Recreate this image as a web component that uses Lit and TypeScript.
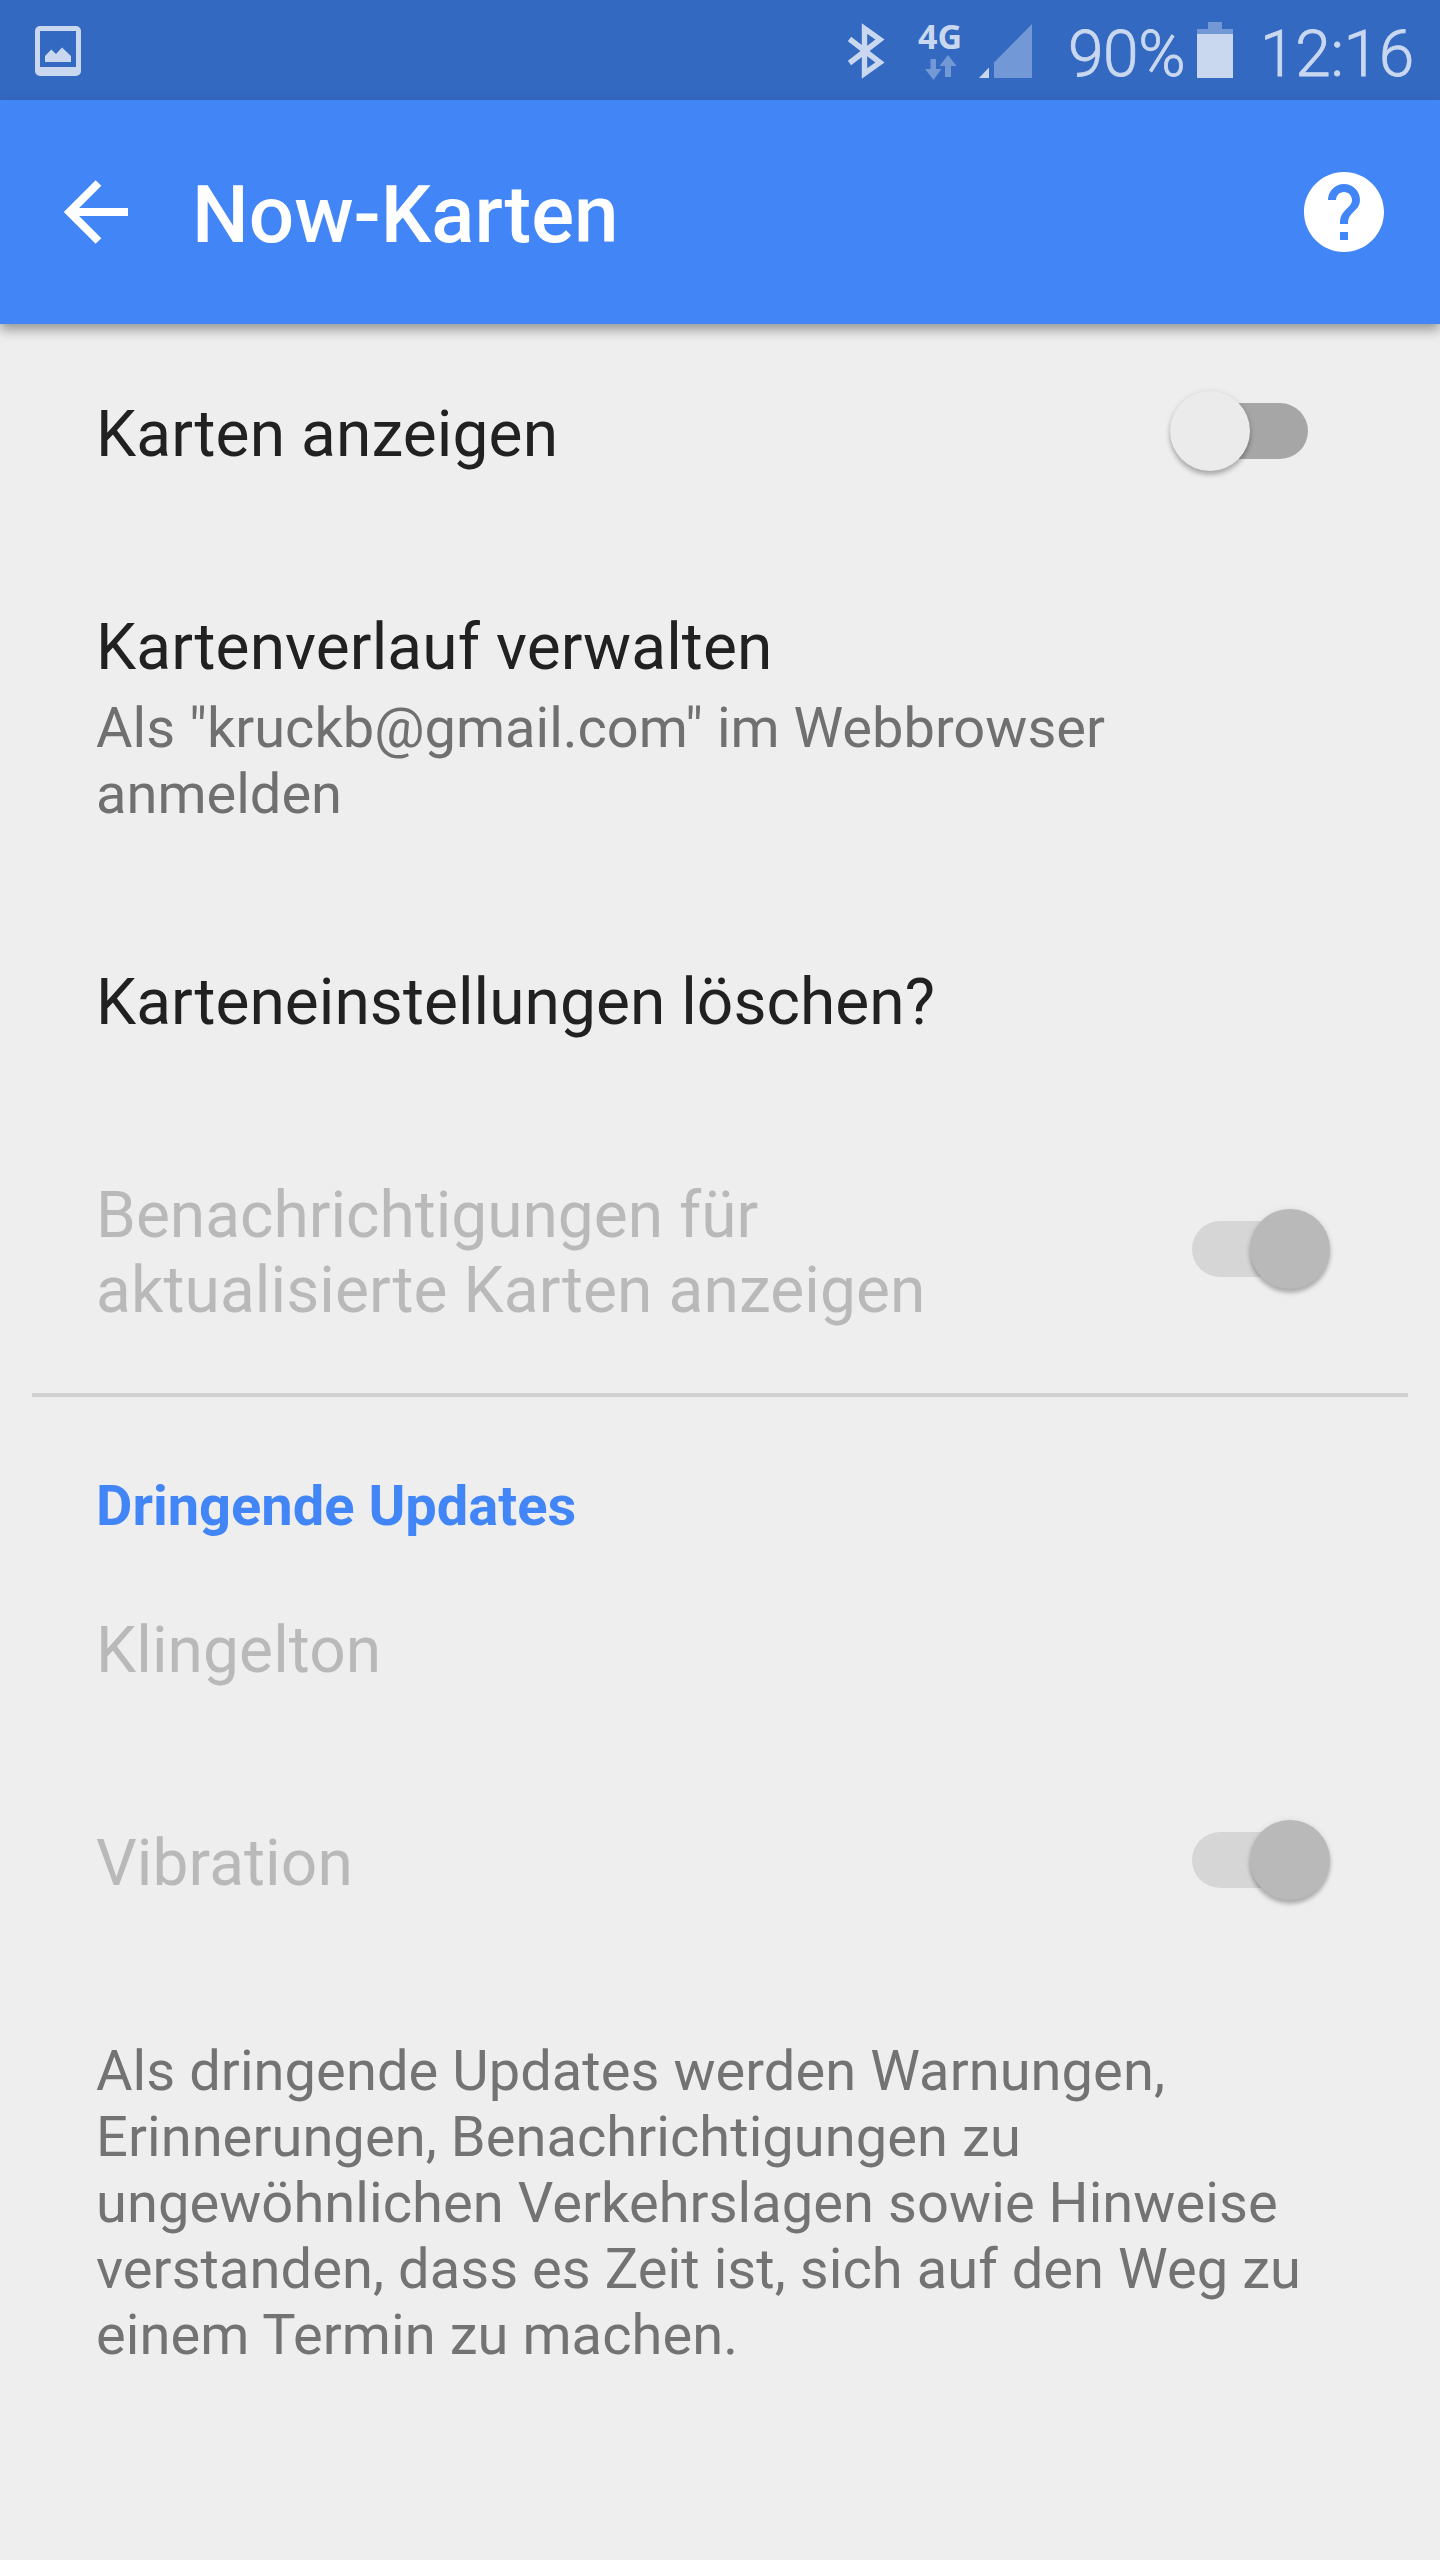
import { LitElement, html, css } from "lit";
import { customElement, property } from "lit/decorators.js";

@customElement("toggle-switch")
class ToggleSwitch extends LitElement {
  @property({ type: Boolean, reflect: true }) on = false;

  static styles = css`
    :host { display: block; flex: none; width: 160px; height: 80px; }
    .box { display: flex; align-items: center; width: 160px; height: 80px; position: relative; }
    .track { width: 116px; height: 56px; margin-left: 22px; border-radius: 28px; background: #a6a6a6; }
    .thumb {
      position: absolute; left: 0; top: 0; width: 80px; height: 80px; border-radius: 50%;
      background: #ebebeb; box-shadow: 0 4px 5px rgba(0, 0, 0, 0.26), 0 0 6px rgba(0, 0, 0, 0.08);
    }
    :host([on]) .track { background: #d6d6d6; }
    :host([on]) .thumb {
      left: 80px; background: #b9b9b9;
      box-shadow: 0 4px 4px rgba(0, 0, 0, 0.25), 0 0 6px rgba(0, 0, 0, 0.08);
    }
  `;

  render() {
    return html`<div class="box"><div class="track"></div><div class="thumb"></div></div>`;
  }
}

@customElement("status-bar")
class StatusBar extends LitElement {
  static styles = css`
    :host { display: block; }
    .bar {
      display: flex; align-items: flex-start; height: 100px; background: #3469c1; color: #cad8ef;
      font: 300 64px/76px Roboto, sans-serif;
    }
    svg { display: block; flex: none; }
    .shot { margin: 26px 0 0 35px; }
    .bt { margin: 23px 0 0 auto; }
    .net { width: 44px; margin: 23px 0 0 33px; }
    .gen { font: 700 34px/26px "Open Sans", "Noto Sans", sans-serif; height: 32px; white-space: nowrap; }
    .sig { margin: 24px 0 0 17px; }
    .pct, .time { white-space: nowrap; -webkit-text-stroke: 0.8px #cad8ef; }
    .pct { width: 115px; margin: 17px 0 0 36px; letter-spacing: -0.4px; }
    .bat { margin: 22px 0 0 14px; }
    .time { width: 180px; margin: 17px 0 0 27px; letter-spacing: -0.3px; }
  `;

  render() {
    return html`<div class="bar">
      <svg class="shot" width="46" height="50" viewBox="0 0 46 50">
        <path fill="#cad8ef" fill-rule="evenodd" d="M5 0H41a5 5 0 0 1 5 5V45a5 5 0 0 1-5 5H5a5 5 0 0 1-5-5V5a5 5 0 0 1 5-5ZM5 5V41H41V5ZM10 36V30L16.3 23.5 21 28 27 21.5 36 30V36Z" />
      </svg>
      <svg class="bt" width="38" height="56" viewBox="0 0 38 56">
        <path fill="none" stroke="#cad8ef" stroke-width="5.4" d="M2.500 16 33 39.500 17.500 50.500V5.500L33 16.500 2.500 40" />
      </svg>
      <div class="net">
        <div class="gen">4G</div>
        <svg width="44" height="26" viewBox="0 0 44 26">
          <path fill="#7298d6" d="M12.500 4H18V14H23.500L15.500 25 7 14H12.500ZM27 22V11H21.500L30 0 38.500 11H33V22Z" />
        </svg>
      </div>
      <svg class="sig" width="53" height="54" viewBox="0 0 53 54">
        <path fill="#cad8ef" d="M0 54 10 43.500V54Z" />
        <path fill="#7298d6" d="M15 54V38.500L53 0V54Z" />
      </svg>
      <div class="pct">90%</div>
      <svg class="bat" width="36" height="56" viewBox="0 0 36 56">
        <path fill="#7298d6" d="M11 0H25V7H36V12H0V7H11Z" />
        <path fill="#cad8ef" d="M0 12H36V56H0Z" />
      </svg>
      <div class="time">12:16</div>
    </div>`;
  }
}

@customElement("app-root")
class AppRoot extends LitElement {
  static styles = css`
    :host {
      display: block; height: 2560px; overflow: hidden; background: #eeeeee;
      font-family: Roboto, sans-serif; color: #212121;
    }
    .appbar {
      display: flex; align-items: flex-start; height: 224px; background: #4285f6; color: #fff;
      box-shadow: 0 6px 11px rgba(0, 0, 0, 0.36);
    }
    svg { display: block; flex: none; }
    .back { margin: 80px 0 0 64px; }
    .title { margin: 68px 0 0 64px; font: 500 80px/94px Roboto, sans-serif; flex: 1; white-space: nowrap; }
    .help { margin: 72px 56px 0 0; }
    .row { display: flex; box-sizing: border-box; padding-left: 96px; }
    .label { font-size: 64px; line-height: 75px; letter-spacing: 0.11px; flex: 1; white-space: nowrap; }
    .sub, .note { font-size: 56px; line-height: 66px; color: #707070; white-space: nowrap; }
    .tight { letter-spacing: 0; }
    .off { color: #b9b9b9; }
    .show { height: 213px; padding-top: 73px; }
    .show toggle-switch { margin: -6px 110px 0 0; }
    .manage { height: 355px; padding-top: 73px; flex-direction: column; }
    .manage .label { flex: none; }
    .manage .sub { margin-top: 10px; }
    .clear { height: 213px; padding-top: 73px; }
    .clear .label { letter-spacing: 0.06px; }
    .notify { height: 288px; padding-top: 73px; }
    .notify toggle-switch { margin: 31px 110px 0 0; }
    .divider { height: 4px; margin: 0 32px; background: #d1d1d1; }
    .section { height: 156px; padding-top: 76px; font: 700 56px/66px Roboto, sans-serif; color: #4285f6; }
    .ring { height: 213px; padding-top: 60px; }
    .vib { height: 213px; padding-top: 60px; }
    .vib toggle-switch { margin: -6px 110px 0 0; }
    .note { padding-top: 59px; letter-spacing: 0.07px; color: #737373; }
  `;

  render() {
    return html`
      <status-bar></status-bar>
      <header class="appbar">
        <svg class="back" width="64" height="64" viewBox="0 0 64 64">
          <path fill="none" stroke="#fff" stroke-width="8" d="M64 32H8M34.500 3 5.500 32 34.500 61" />
        </svg>
        <div class="title">Now-Karten</div>
        <svg class="help" width="80" height="80" viewBox="2 2 20 20">
          <path fill="#fff" d="M12 2C6.480 2 2 6.480 2 12s4.480 10 10 10 10-4.480 10-10S17.520 2 12 2zm1 17h-2v-2h2v2zm2.070-7.750l-.9.920C13.450 12.900 13 13.500 13 15h-2v-.5c0-1.100.45-2.100 1.170-2.830l1.240-1.260c.37-.36.590-.86.590-1.410 0-1.100-.9-2-2-2s-2 .9-2 2H8c0-2.210 1.790-4 4-4s4 1.790 4 4c0 .88-.36 1.680-.93 2.250z" />
        </svg>
      </header>
      <main>
        <div class="row show">
          <div class="label">Karten anzeigen</div>
          <toggle-switch></toggle-switch>
        </div>
        <div class="row manage">
          <div class="label">Kartenverlauf verwalten</div>
          <div class="sub">Als "kruckb@gmail.com" im Webbrowser<br />anmelden</div>
        </div>
        <div class="row clear"><div class="label">Karteneinstellungen löschen?</div></div>
        <div class="row notify">
          <div class="label off"><span class="tight">Benachrichtigungen für</span><br />aktualisierte Karten anzeigen</div>
          <toggle-switch on></toggle-switch>
        </div>
        <div class="divider"></div>
        <div class="row section">Dringende Updates</div>
        <div class="row ring"><div class="label off">Klingelton</div></div>
        <div class="row vib">
          <div class="label off">Vibration</div>
          <toggle-switch on></toggle-switch>
        </div>
        <div class="row note">
          <div>
            Als dringende Updates werden Warnungen,<br />Erinnerungen, Benachrichtigungen zu<br />ungewöhnlichen
            Verkehrslagen sowie Hinweise<br />verstanden, dass es Zeit ist, sich auf den Weg zu<br />einem Termin zu
            machen.
          </div>
        </div>
      </main>
    `;
  }
}
